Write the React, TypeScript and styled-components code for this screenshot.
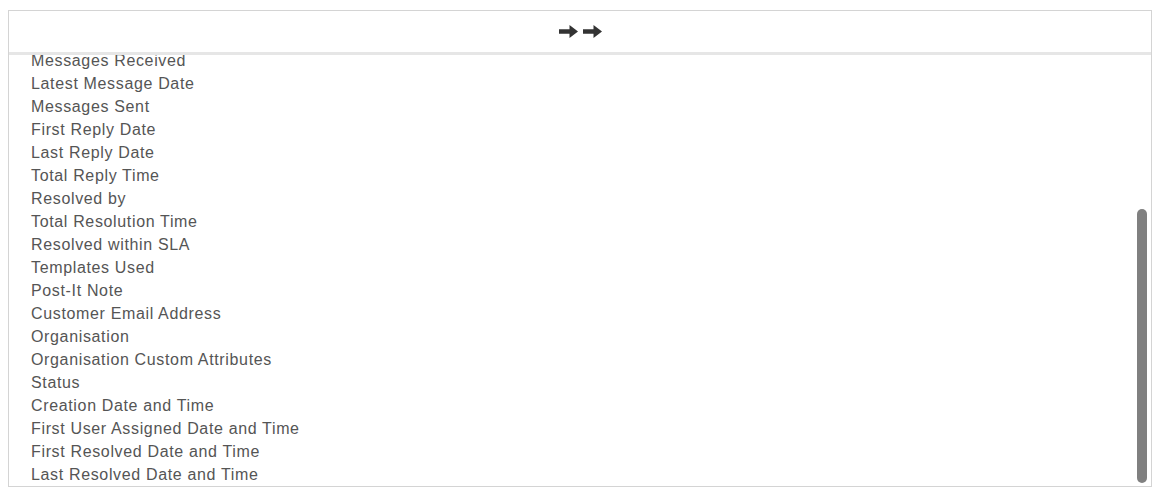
import React, { useLayoutEffect, useRef, useState } from "react";
import styled, { createGlobalStyle } from "styled-components";

const GlobalStyle = createGlobalStyle`
  html, body {
    margin: 0;
    padding: 0;
    background: #ffffff;
  }
  body {
    font-family: "Liberation Sans", Arial, sans-serif;
  }
`;

const Page = styled.div`
  padding: 10px 17px 13px 8px;
`;

const Panel = styled.div`
  display: flex;
  flex-direction: column;
  border: 1px solid #d4d4d4;
  height: 477px;
  box-sizing: border-box;
  background: #fff;
`;

const Header = styled.div`
  display: flex;
  align-items: center;
  justify-content: center;
  gap: 5px;
  height: 41px;
  flex-shrink: 0;
  border-bottom: 3px solid #e6e6e6;
`;

const ListArea = styled.div`
  position: relative;
  flex: 1;
  min-height: 0;
`;

const FieldList = styled.ul`
  list-style: none;
  margin: 0;
  padding: 4px 0 0 0;
  height: 100%;
  box-sizing: border-box;
  overflow: hidden;
`;

const FieldItem = styled.li`
  font-size: 16px;
  line-height: 23px;
  letter-spacing: 0.65px;
  color: #555555;
  padding-left: 22px;
  white-space: nowrap;
`;

const ScrollThumb = styled.div`
  position: absolute;
  right: 4px;
  width: 10px;
  border-radius: 5px;
  background: #808080;
`;

const Arrow = () => (
  <svg width="19" height="13" viewBox="0 0 19 13">
    <path d="M0 4.3 H10.5 V0 L19 6.5 L10.5 13 V8.7 H0 Z" fill="#333" />
  </svg>
);

// the list is scrolled to its end; the first ten entries sit above the fold
const fields = [
  "Conversation ID",
  "Channel",
  "Subject",
  "Assigned User",
  "Assigned Team",
  "Tags",
  "Priority",
  "Inbox",
  "Customer Name",
  "Customer Phone",
  "Messages Received",
  "Latest Message Date",
  "Messages Sent",
  "First Reply Date",
  "Last Reply Date",
  "Total Reply Time",
  "Resolved by",
  "Total Resolution Time",
  "Resolved within SLA",
  "Templates Used",
  "Post-It Note",
  "Customer Email Address",
  "Organisation",
  "Organisation Custom Attributes",
  "Status",
  "Creation Date and Time",
  "First User Assigned Date and Time",
  "First Resolved Date and Time",
  "Last Resolved Date and Time",
];

export default function App() {
  const listRef = useRef<HTMLUListElement>(null);
  const [thumb, setThumb] = useState({ top: 0, height: 0 });

  useLayoutEffect(() => {
    const el = listRef.current;
    if (!el) return;
    el.scrollTop = el.scrollHeight;
    const track = el.clientHeight - 4;
    const height = (el.clientHeight / el.scrollHeight) * track;
    const top = 1 + (el.scrollTop / el.scrollHeight) * track;
    setThumb({ top, height });
  }, []);

  return (
    <>
      <GlobalStyle />
      <Page>
        <Panel>
          <Header>
            <Arrow />
            <Arrow />
          </Header>
          <ListArea>
            <FieldList ref={listRef}>
              {fields.map((f) => (
                <FieldItem key={f}>{f}</FieldItem>
              ))}
            </FieldList>
            {thumb.height > 0 && (
              <ScrollThumb style={{ top: thumb.top, height: thumb.height }} />
            )}
          </ListArea>
        </Panel>
      </Page>
    </>
  );
}
